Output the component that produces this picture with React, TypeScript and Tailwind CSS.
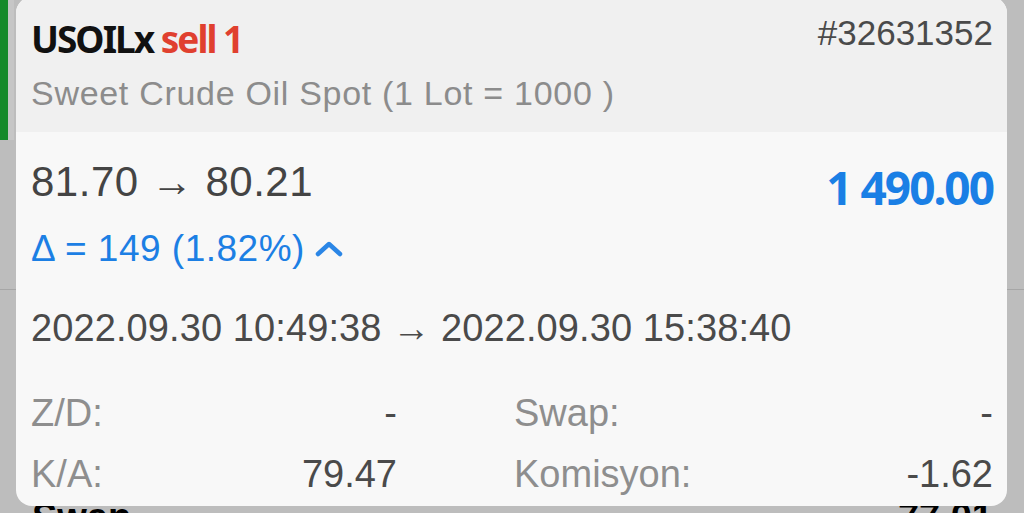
import React from "react";

const sans = { fontFamily: "'Liberation Sans', Arial, sans-serif" };
const cond = { fontFamily: "'Noto Sans', Roboto, sans-serif" };

function Row({ label, value }: { label: string; value: string }) {
  return (
    <div className="flex justify-between items-start text-[38px] leading-none">
      <span className="text-[#8e8e8e]">{label}</span>
      <span className="text-[#4a4a4a]">{value}</span>
    </div>
  );
}

export default function App() {
  return (
    <div className="relative w-[1024px] h-[513px] overflow-hidden bg-[#bdbdbd]" style={sans}>
      {/* background list behind the sheet */}
      <div className="flex flex-col h-full">
        <div className="h-[290px] border-b border-[#a6a6a6] flex shrink-0">
          <div className="w-2 h-[140px] bg-[#168a2a]" />
          <div className="w-[6px] h-[140px] bg-[#c6c6c6]" />
        </div>
        <div className="flex justify-between pt-[208px] pl-[32px] pr-[31px] text-[38px] leading-none font-bold text-black">
          <span>Swap</span>
          <span>77.01</span>
        </div>
      </div>

      {/* overlay card */}
      <div className="absolute left-4 top-[-3px] w-[991px] h-[509px] rounded-2xl overflow-hidden bg-[#f8f8f8] flex flex-col">
        <div className="h-[135px] shrink-0 bg-[#f0f0f0] pl-[15px] pr-[14px] pt-[18px]">
          <div className="flex justify-between items-start h-[45px]">
            <div
              className="mt-[5px] text-[37px] leading-none font-bold tracking-[-2px]"
              style={cond}
            >
              <span className="text-[#111111]">USOILx </span>
              <span className="text-[#e0402f]">sell 1</span>
            </div>
            <div className="text-[35px] leading-none text-[#4a4a4a]">#32631352</div>
          </div>
          <div className="mt-[16px] text-[34px] leading-none tracking-[0.7px] text-[#8c8c8c]">
            Sweet Crude Oil Spot (1 Lot = 1000 )
          </div>
        </div>

        <div className="flex-1 pl-[15px] pr-[14px] pt-[29px]">
          <div className="flex justify-between items-start">
            <div className="flex flex-col">
              <div className="text-[42px] leading-none tracking-[0.5px] text-[#444444]">81.70 → 80.21</div>
              <div className="mt-[27px] flex items-center text-[37px] leading-none tracking-[0.5px] text-[#1c7fe4]">
                <span>Δ = 149 (1.82%)</span>
                <svg width="28" height="18" viewBox="0 0 28 18" className="ml-[10px]">
                  <polyline
                    points="3,14 14,4 25,14"
                    fill="none"
                    stroke="#2b86e6"
                    strokeWidth="4.5"
                    strokeLinecap="round"
                    strokeLinejoin="round"
                  />
                </svg>
              </div>
            </div>
            <div
              className="mt-[3px] text-[46px] leading-none font-bold tracking-[-2px] text-[#1a7fe5]"
              style={cond}
            >
              1 490.00
            </div>
          </div>

          <div className="mt-[42px] text-[38px] leading-none tracking-[0.1px] text-[#4a4a4a]">
            2022.09.30 10:49:38 → 2022.09.30 15:38:40
          </div>

          <div className="mt-[47px] grid grid-cols-[366px_1fr] gap-x-[117px]">
            <Row label="Z/D:" value="-" />
            <Row label="Swap:" value="-" />
          </div>
          <div className="mt-[23px] grid grid-cols-[366px_1fr] gap-x-[117px]">
            <Row label="K/A:" value="79.47" />
            <Row label="Komisyon:" value="-1.62" />
          </div>
        </div>
      </div>
    </div>
  );
}
